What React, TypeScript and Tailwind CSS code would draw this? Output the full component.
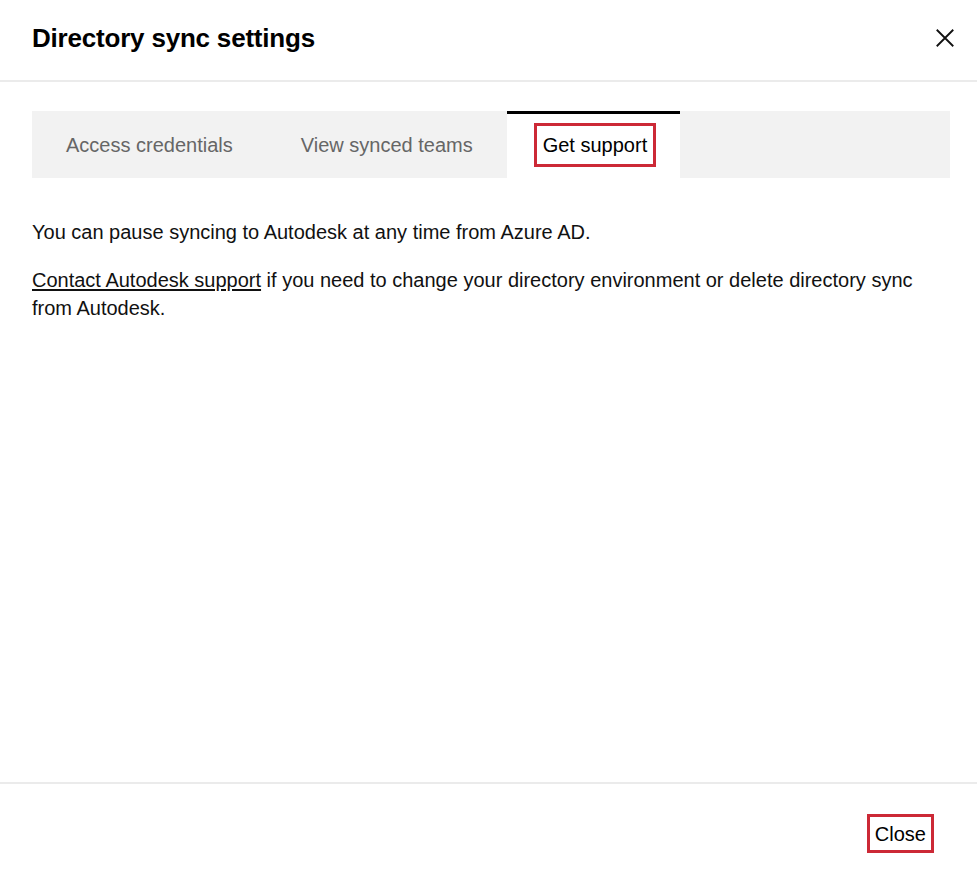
import React from 'react';

const tabs = ['Access credentials', 'View synced teams', 'Get support'];

export default function App() {
  const active = 2;
  return (
    <div
      className="w-full h-[886px] bg-white flex flex-col text-black"
      style={{ fontFamily: '"Liberation Sans", Arial, sans-serif' }}
    >
      {/* header */}
      <div className="h-[82px] shrink-0 border-b-2 border-[#ebebeb] pl-8 pr-[20px] flex items-center justify-between pb-1">
        <h1 className="text-[26px] font-bold tracking-[-0.2px]">Directory sync settings</h1>
        <button className="w-6 h-6 flex items-center justify-center" aria-label="Close">
          <svg viewBox="0 0 24 24" className="w-[22px] h-[22px]" fill="none" stroke="#111" strokeWidth="2">
            <path d="M3 3 L21 21 M21 3 L3 21" />
          </svg>
        </button>
      </div>

      {/* body */}
      <div className="flex-1 pl-8 pr-[27px] pt-[29px]">
        <div className="flex h-[67px] bg-[#f2f2f2]">
          {tabs.map((t, i) =>
            i === active ? (
              <div key={t} className="bg-white border-t-[3px] border-black pl-[27px] pr-[24px] flex items-center pb-[3px]">
                <span className="border-[3px] border-[#cc2936] px-[6px] py-[4px] text-[20px] leading-[30px] text-black">
                  {t}
                </span>
              </div>
            ) : (
              <div key={t} className="px-[34px] flex items-center text-[20px] text-[#666]">
                {t}
              </div>
            )
          )}
        </div>

        <p className="mt-10 text-[20px] leading-[28px] text-[#111]">
          You can pause syncing to Autodesk at any time from Azure AD.
        </p>
        <p className="mt-5 text-[20px] leading-[28px] text-[#111]">
          <a href="#" className="underline underline-offset-2">Contact Autodesk support</a> if you need to
          change your directory environment or delete directory sync from Autodesk.
        </p>
      </div>

      {/* footer */}
      <div className="h-[104px] shrink-0 border-t-2 border-[#ebebeb] flex items-center justify-end pr-[43px] pb-[3px]">
        <button className="border-[3px] border-[#cc2936] px-[5px] h-[39px] text-[20px] text-black">
          Close
        </button>
      </div>
    </div>
  );
}
